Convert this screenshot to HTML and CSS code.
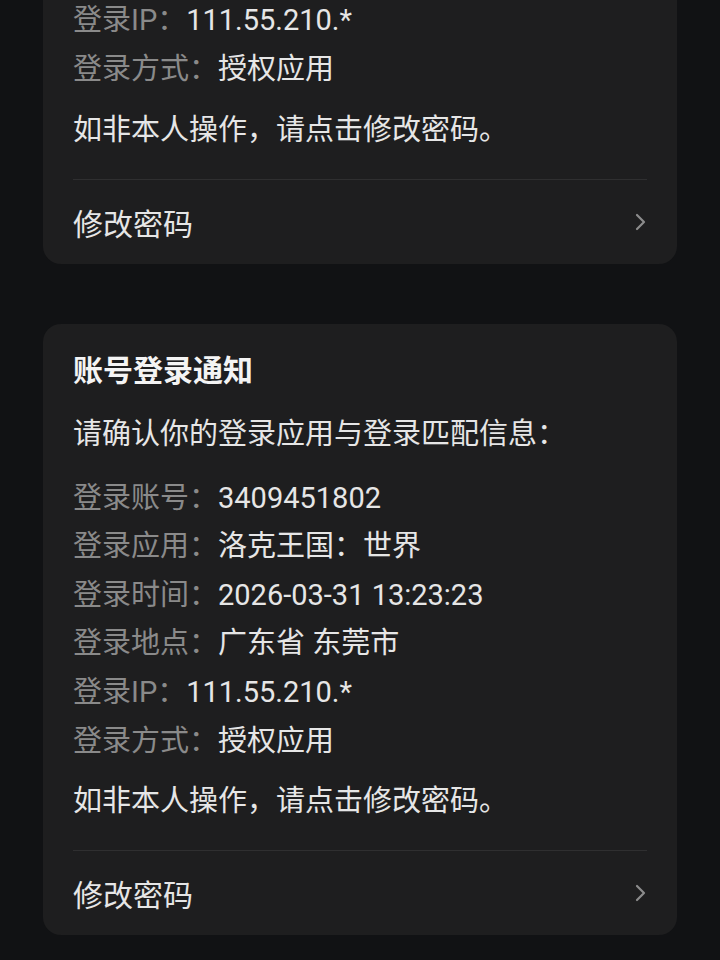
FILE: index.html
```html
<!DOCTYPE html>
<html lang="zh-CN">
<head>
    <meta charset="UTF-8">
    <meta name="viewport" content="width=device-width, initial-scale=1.0">
    <title>账号登录通知</title>
    <link rel="stylesheet" href="styles.css">
</head>
<body>
    <div class="feed">
        <div class="card card-first">
            <h2 class="card-title">账号登录通知</h2>
            <p class="intro">请确认你的登录应用与登录匹配信息：</p>
            <ul class="info">
                <li><span class="label">登录账号：</span><span class="value">3409451802</span></li>
                <li><span class="label">登录应用：</span><span class="value">洛克王国：世界</span></li>
                <li><span class="label">登录时间：</span><span class="value">2026-03-31 13:23:23</span></li>
                <li><span class="label">登录地点：</span><span class="value">广东省 东莞市</span></li>
                <li><span class="label">登录IP：</span><span class="value">111.55.210.*</span></li>
                <li><span class="label">登录方式：</span><span class="value">授权应用</span></li>
            </ul>
            <p class="warn">如非本人操作，请点击修改密码。</p>
            <a class="action" href="#">
                <span>修改密码</span>
                <svg class="chevron" viewBox="0 0 14 18" width="14" height="18"><path d="M3 2 L10 9 L3 16" fill="none" stroke="currentColor" stroke-width="2.2" stroke-linecap="round" stroke-linejoin="round"/></svg>
            </a>
        </div>

        <div class="card">
            <h2 class="card-title">账号登录通知</h2>
            <p class="intro">请确认你的登录应用与登录匹配信息：</p>
            <ul class="info">
                <li><span class="label">登录账号：</span><span class="value">3409451802</span></li>
                <li><span class="label">登录应用：</span><span class="value">洛克王国：世界</span></li>
                <li><span class="label">登录时间：</span><span class="value">2026-03-31 13:23:23</span></li>
                <li><span class="label">登录地点：</span><span class="value">广东省 东莞市</span></li>
                <li><span class="label">登录IP：</span><span class="value">111.55.210.*</span></li>
                <li><span class="label">登录方式：</span><span class="value">授权应用</span></li>
            </ul>
            <p class="warn">如非本人操作，请点击修改密码。</p>
            <a class="action" href="#">
                <span>修改密码</span>
                <svg class="chevron" viewBox="0 0 14 18" width="14" height="18"><path d="M3 2 L10 9 L3 16" fill="none" stroke="currentColor" stroke-width="2.2" stroke-linecap="round" stroke-linejoin="round"/></svg>
            </a>
        </div>
    </div>
</body>
</html>
```
FILE: styles.css
```css
* {
    box-sizing: border-box;
}

body {
    margin: 0;
    padding: 0;
    background: #111214;
    font-family: Roboto, "Noto Sans CJK SC", sans-serif;
    color: #e6e6e6;
    overflow: hidden;
}

.feed {
    display: flex;
    flex-direction: column;
    gap: 60px;
    padding: 0 43px;
}

.card {
    background: #1e1e1f;
    border-radius: 18px;
    padding: 23px 30px 0;
}

.card-first {
    margin-top: -348px;
}

.card-title {
    margin: 0;
    font-size: 30px;
    font-weight: 700;
    line-height: 48px;
    color: #f4f4f4;
}

.intro {
    margin: 15px 0 0;
    font-size: 29px;
    line-height: 48px;
}

.info {
    list-style: none;
    margin: 16px 0 0;
    padding: 0;
}

.info li {
    font-size: 29px;
    line-height: 48.6px;
    white-space: nowrap;
}

.info .label {
    color: #8a8a8a;
}

.info .value {
    color: #e6e6e6;
}

.warn {
    margin: 12px 0 0;
    font-size: 29px;
    line-height: 48px;
    padding-bottom: 25px;
    border-bottom: 1px solid #2f2f30;
}

.action {
    display: flex;
    align-items: center;
    justify-content: space-between;
    height: 84px;
    font-size: 30px;
    color: #e6e6e6;
    text-decoration: none;
}

.chevron {
    color: #8c8c8c;
    margin-right: -1px;
}
```
